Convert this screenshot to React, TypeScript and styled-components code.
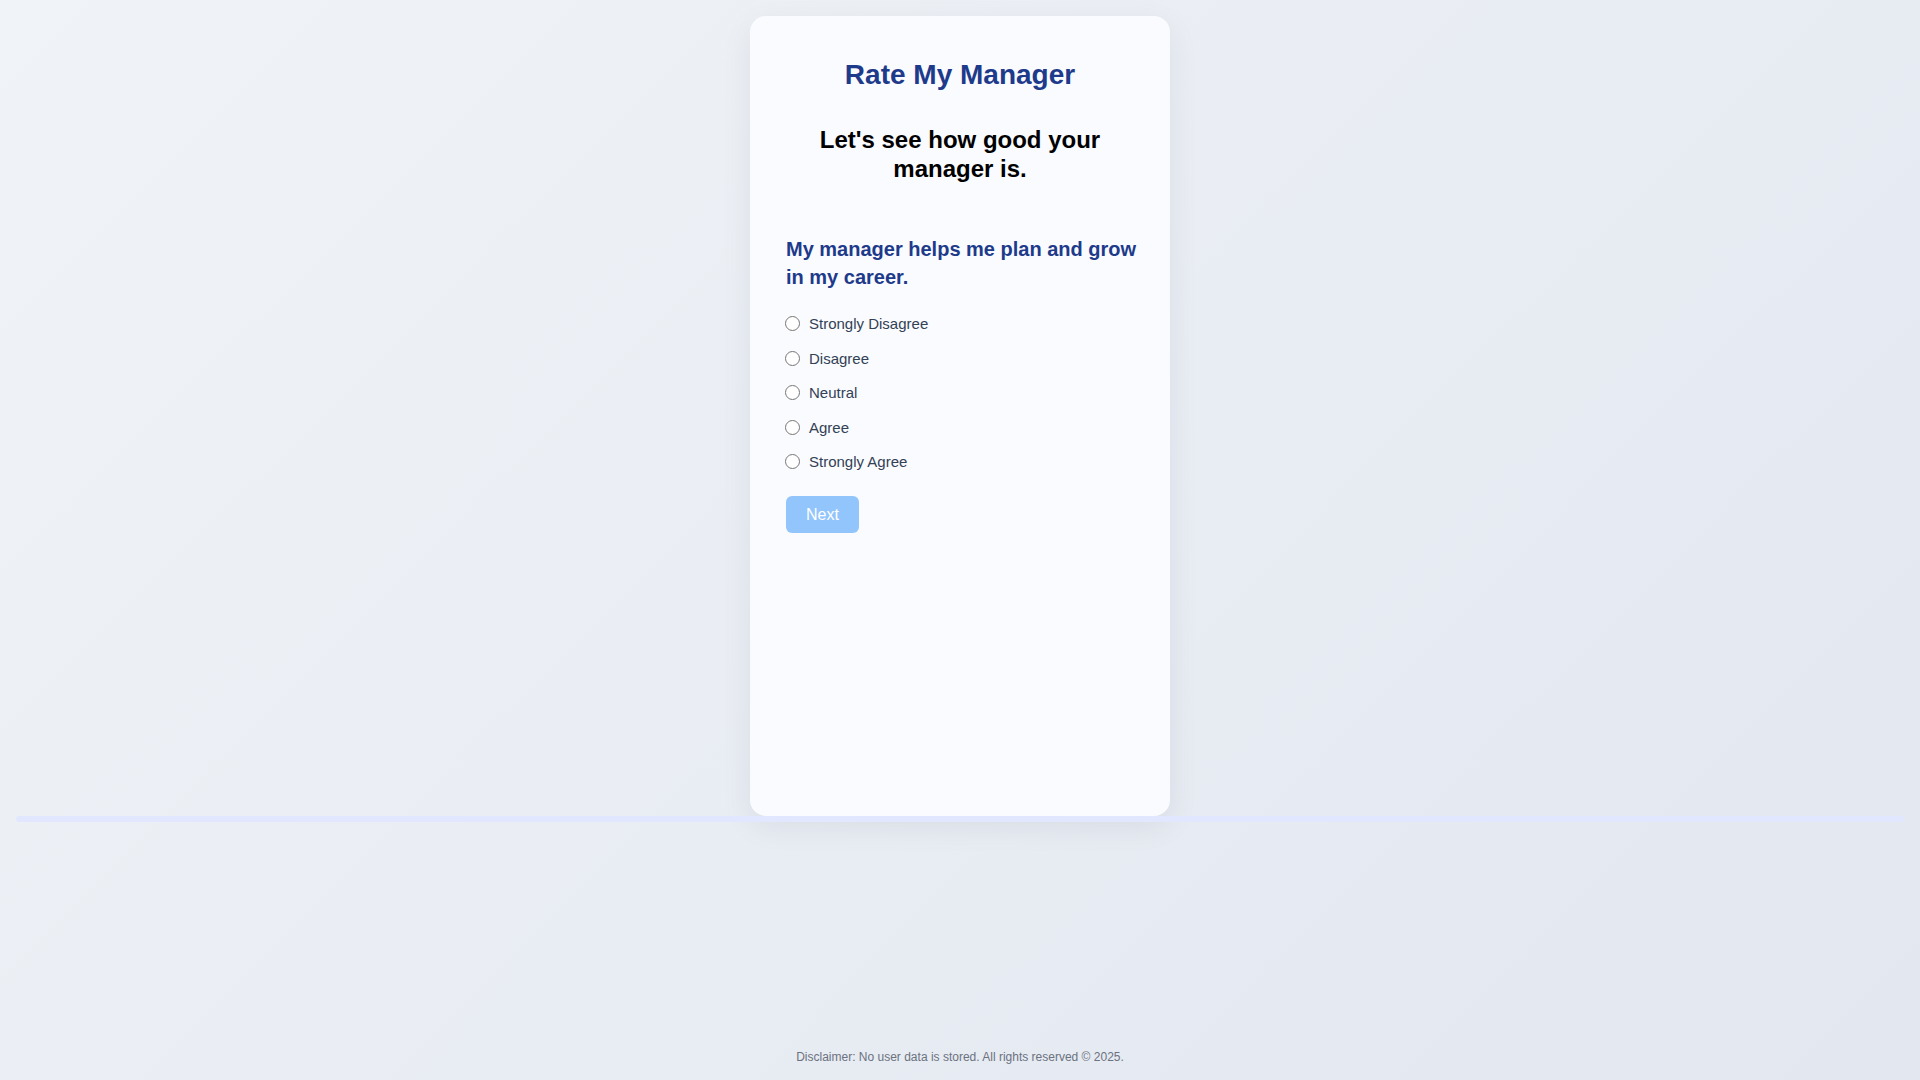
import React, { useState } from 'react';
import styled, { createGlobalStyle } from 'styled-components';

const GlobalStyle = createGlobalStyle`
  * {
    box-sizing: border-box;
  }

  body {
    margin: 0;
    font-family: 'Liberation Sans', Arial, sans-serif;
    background: linear-gradient(135deg, #f0f3f7 0%, #e2e7f0 100%);
    min-height: 100vh;
  }
`;

const Page = styled.div`
  min-height: 100vh;
  display: flex;
  flex-direction: column;
  padding: 16px 16px 16px;
`;

const Main = styled.main`
  display: flex;
  flex-direction: column;
  align-items: center;
`;

const Card = styled.section`
  width: 420px;
  height: 800px;
  padding: 40px 32px;
  background: #f9fbff;
  border-radius: 16px;
  box-shadow: 0 10px 32px rgba(15, 23, 42, 0.07);
`;

const Title = styled.h1`
  margin: 0;
  text-align: center;
  font-size: 28px;
  line-height: 38px;
  font-weight: 700;
  color: #1e3a8a;
`;

const Subtitle = styled.h2`
  margin: 32px 0 0;
  text-align: center;
  font-size: 24px;
  line-height: 28.8px;
  font-weight: 700;
  color: #000;
`;

const Question = styled.div`
  margin-top: 51px;
  padding-left: 4px;
`;

const QuestionText = styled.h3`
  margin: 0 0 23px;
  font-size: 20px;
  line-height: 28px;
  font-weight: 700;
  color: #1e3a8a;
`;

const Option = styled.label`
  display: flex;
  align-items: center;
  gap: 9px;
  height: 20px;
  margin-bottom: 14.5px;
  font-size: 15px;
  color: #334155;
  cursor: pointer;
`;

const Radio = styled.input`
  appearance: none;
  flex-shrink: 0;
  width: 15px;
  height: 15px;
  margin: 0 0 0 -1px;
  border: 1.5px solid #767676;
  border-radius: 50%;
  background: #fff;
  cursor: pointer;

  &:checked {
    border-color: #2563eb;
    background: radial-gradient(circle, #2563eb 0 3.5px, #fff 4px);
  }
`;

const NextButton = styled.button`
  margin-top: 9.5px;
  padding: 10px 20px;
  border: none;
  border-radius: 6px;
  background: ${({ disabled }) => (disabled ? '#93c5fd' : '#2563eb')};
  color: #fff;
  font-family: inherit;
  font-size: 16px;
  line-height: 17px;
  cursor: ${({ disabled }) => (disabled ? 'default' : 'pointer')};
`;

const ProgressTrack = styled.div`
  align-self: stretch;
  height: 6px;
  border-radius: 3px;
  background: #e0e7ff;
  overflow: hidden;
`;

const ProgressFill = styled.div`
  height: 100%;
  background: #6366f1;
`;

const Footer = styled.footer`
  margin-top: auto;
  text-align: center;
  font-size: 12px;
  line-height: 14px;
  color: #6b7280;
`;

const OPTIONS = [
  'Strongly Disagree',
  'Disagree',
  'Neutral',
  'Agree',
  'Strongly Agree',
];

const App = function () {
  const [answer, setAnswer] = useState<string | null>(null);
  const progress = 0;

  return (
    <>
      <GlobalStyle />
      <Page>
        <Main>
          <Card>
            <Title>Rate My Manager</Title>
            <Subtitle>Let's see how good your manager is.</Subtitle>

            <Question>
              <QuestionText>
                My manager helps me plan and grow in my career.
              </QuestionText>
              {OPTIONS.map((option) => (
                <Option key={option}>
                  <Radio
                    type="radio"
                    name="q1"
                    value={option}
                    checked={answer === option}
                    onChange={() => setAnswer(option)}
                  />
                  {option}
                </Option>
              ))}
              <NextButton disabled={!answer}>Next</NextButton>
            </Question>
          </Card>
          <ProgressTrack>
            <ProgressFill style={{ width: `${progress}%` }} />
          </ProgressTrack>
        </Main>
        <Footer>Disclaimer: No user data is stored. All rights reserved © 2025.</Footer>
      </Page>
    </>
  );
};

export default App;
